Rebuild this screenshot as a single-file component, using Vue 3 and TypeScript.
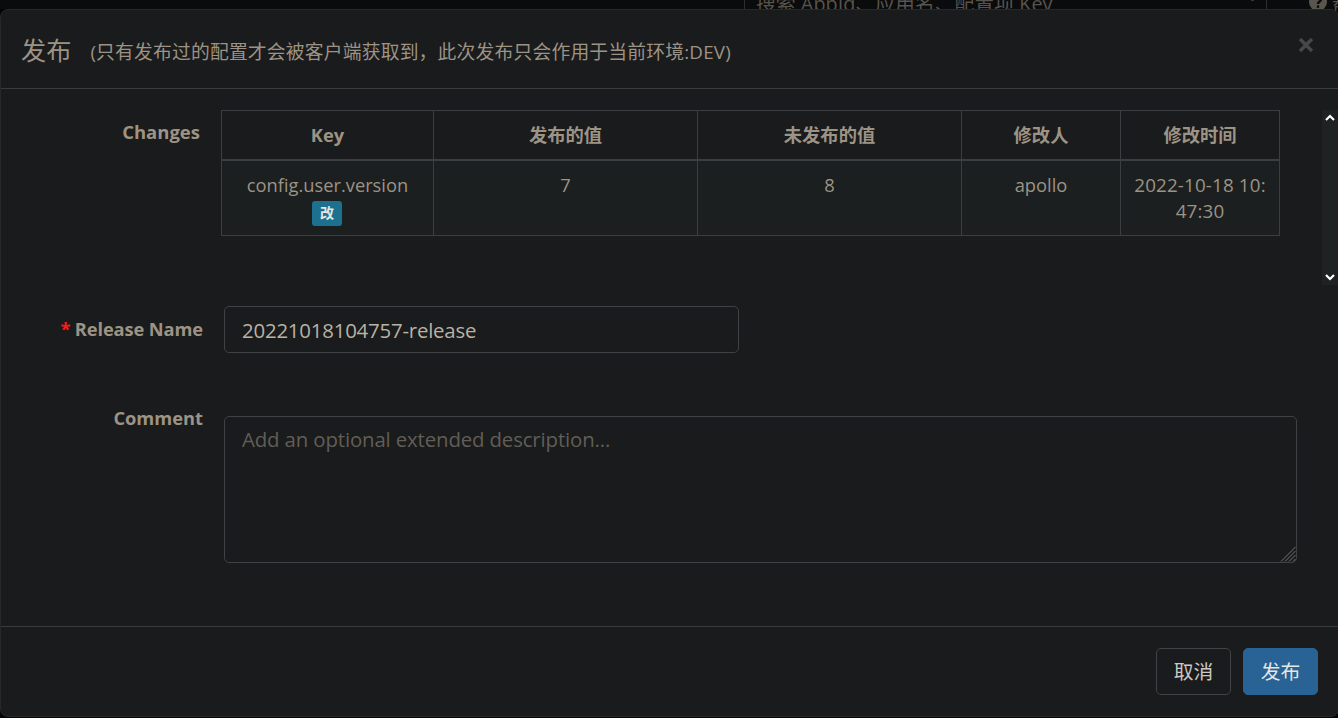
<script setup lang="ts">
import { ref } from 'vue'

interface Change {
  key: string
  oldValue: string
  newValue: string
  operator: string
  time: string[]
}

const headers: string[] = ['Key', '发布的值', '未发布的值', '修改人', '修改时间']
const changes: Change[] = [
  { key: 'config.user.version', oldValue: '7', newValue: '8', operator: 'apollo', time: ['2022-10-18 10:', '47:30'] },
]
const releaseName = ref('20221018104757-release')
const comment = ref('')
</script>

<template>
  <div class="page">
    <div class="navbar">
      <div class="search"><span class="search-text">搜索 AppId、应用名、配置项 Key</span><i class="caret"></i></div>
      <svg class="help" width="18" height="18" viewBox="0 0 18 18">
        <circle cx="9" cy="9" r="9" fill="#5a554d" />
        <path d="M6 6.5C6 3 12 3 12 6.5C12 8.6 9 8.6 9 11" fill="none" stroke="#0b0c0d" stroke-width="2.4" />
        <rect x="7.8" y="12.4" width="2.4" height="2.4" fill="#0b0c0d" />
      </svg>
      <span class="help-text">帮助</span>
    </div>

    <div class="modal">
      <header class="modal-header">
        <h4 class="title">发布</h4>
        <small class="subtitle">(只有发布过的配置才会被客户端获取到，此次发布只会作用于当前环境:DEV)</small>
        <button class="close" type="button" aria-label="Close">
          <svg width="16" height="16" viewBox="0 0 16 16">
            <path d="M2 2L14 14M14 2L2 14" stroke="#474848" stroke-width="3.4" fill="none" />
          </svg>
        </button>
      </header>

      <section class="modal-body">
        <div class="changes">
          <div class="label changes-label">Changes</div>
          <table class="table">
            <colgroup>
              <col class="c-key" /><col class="c-val" /><col class="c-val" /><col class="c-meta" /><col class="c-meta" />
            </colgroup>
            <thead>
              <tr><th v-for="h in headers" :key="h">{{ h }}</th></tr>
            </thead>
            <tbody>
              <tr v-for="c in changes" :key="c.key">
                <td><span class="key">{{ c.key }}</span><span class="badge">改</span></td>
                <td>{{ c.oldValue }}</td>
                <td>{{ c.newValue }}</td>
                <td>{{ c.operator }}</td>
                <td><span v-for="t in c.time" :key="t" class="time">{{ t }}</span></td>
              </tr>
            </tbody>
          </table>
          <div class="scrollbar">
            <svg width="10" height="8" viewBox="0 0 10 8"><path d="M1 6L5 2L9 6" fill="none" stroke="#fff" stroke-width="2.2" /></svg>
            <svg width="10" height="8" viewBox="0 0 10 8"><path d="M1 2L5 6L9 2" fill="none" stroke="#fff" stroke-width="2.2" /></svg>
          </div>
        </div>

        <div class="row name-row">
          <label class="label form-label name-label" for="name"><span class="star">*</span> Release Name</label>
          <input id="name" v-model="releaseName" class="control input" type="text" />
        </div>

        <div class="row comment-row">
          <label class="label form-label" for="comment">Comment</label>
          <div class="area-wrap">
            <textarea id="comment" v-model="comment" class="control area" placeholder="Add an optional extended description..."></textarea>
            <svg class="grip" width="16" height="16" viewBox="0 0 16 16">
              <path d="M1 15.5L15.5 1M5 15.5L15.5 5M9 15.5L15.5 9M13 15.5L15.5 13" stroke="#77756f" stroke-width="1" fill="none" />
            </svg>
          </div>
        </div>
      </section>

      <footer class="modal-footer">
        <button class="btn" type="button">取消</button>
        <button class="btn primary" type="button">发布</button>
      </footer>
    </div>
  </div>
</template>

<style>
html, body { margin: 0; background: #040404; overflow: hidden; }
</style>

<style scoped>
* { box-sizing: border-box; }
.page {
  width: 1338px;
  height: 718px;
  overflow: hidden;
  background: #040404;
  font-family: "Open Sans", "Noto Sans CJK SC", sans-serif;
  font-size: 18.3px;
  color: #9d9385;
}
.navbar {
  height: 9px;
  display: flex;
  align-items: flex-start;
  background: #0a0b0c;
}
.search {
  position: relative;
  flex: none;
  margin-left: 744px;
  width: 523px;
  height: 9px;
  padding-left: 11px;
  border-left: 1px solid #2b2d2e;
  border-right: 1px solid #2b2d2e;
  white-space: nowrap;
}
.search-text {
  display: block;
  margin-top: -9px;
  font-size: 19.85px;
  line-height: 26px;
  color: #58534b;
}
.caret { position: absolute; right: 12px; top: 0; width: 3px; height: 1px; background: #3a3834; }
.help { margin: -7px 0 0 42px; flex: none; }
.help-text { flex: none; margin: -9px 0 0 5px; font-size: 19px; line-height: 26px; color: #58534b; white-space: nowrap; }
.modal {
  position: relative;
  width: 1339px;
  height: 708px;
  display: flex;
  flex-direction: column;
  background: #191b1c;
  border: 1px solid #292826;
  border-radius: 8px;
}
.modal-header {
  height: 79px;
  flex: none;
  display: flex;
  padding-left: 20px;
  border-bottom: 1px solid #393c3d;
  white-space: nowrap;
}
.title { margin: 22px 0 0; font-size: 25.2px; line-height: 36px; font-weight: 400; }
.subtitle { margin: 28px 0 0 19px; font-size: 18.8px; line-height: 28px; letter-spacing: 0.19px; }
.close {
  margin: 27px 24px 0 auto;
  width: 16px;
  height: 16px;
  padding: 0;
  border: 0;
  background: none;
}
.close svg { display: block; }
.modal-body { height: 537px; flex: none; padding-top: 21px; }
.changes { display: flex; height: 175px; }
.label { font-weight: 700; text-align: right; line-height: 26px; white-space: nowrap; flex: none; }
.changes-label { width: 199px; margin: 9px 21px 0 0; font-size: 18.5px; }
.table {
  width: 1059px;
  height: 126px;
  flex: none;
  align-self: flex-start;
  table-layout: fixed;
  border-collapse: collapse;
  text-align: center;
}
.c-key { width: 212px; }
.c-val { width: 264px; }
.c-meta { width: 159px; }
th, td { border: 1px solid #3c3f41; padding: 0; line-height: 26px; }
th { height: 49px; border-bottom-width: 2px; font-weight: 700; }
td { height: 75px; padding-top: 11px; vertical-align: top; background: #1b1f20; }
.key, .time { display: block; }
.time { font-size: 18.8px; letter-spacing: 0.16px; }
.badge {
  display: block;
  width: 30px;
  height: 25px;
  margin: 3px auto 0 90px;
  border-radius: 3px;
  background: #1c728e;
  color: #e8e6e3;
  font-size: 14px;
  line-height: 24px;
  font-weight: 700;
}
.scrollbar {
  width: 16px;
  height: 175px;
  margin-left: 42px;
  padding: 4px 3px;
  display: flex;
  flex-direction: column;
  justify-content: space-between;
  background: #1f2223;
}
.row { display: flex; }
.form-label { width: 202px; margin-right: 21px; }
.name-row { margin-top: 21px; height: 47px; }
.name-row .label { margin-top: 10px; }
.name-label { letter-spacing: -0.12px; }
.star { color: #ff1a1a; }
.comment-row { margin-top: 63px; height: 147px; }
.comment-row .label { margin-top: -11px; }
.control {
  display: block;
  margin: 0;
  padding: 0 17px;
  font-family: inherit;
  font-size: 20.4px;
  color: #b9b2a6;
  background: #191b1c;
  border: 1px solid #3d4244;
  border-radius: 5px;
  outline: none;
}
.input { width: 515px; height: 47px; letter-spacing: -0.2px; }
.area-wrap { position: relative; width: 1073px; height: 147px; }
.area { width: 1073px; height: 147px; padding-top: 8px; line-height: 29px; letter-spacing: -0.14px; resize: none; overflow: hidden; }
.area::placeholder { color: #625e57; opacity: 1; }
.grip { position: absolute; right: 1px; bottom: 1px; }
.modal-footer {
  flex: 1;
  display: flex;
  justify-content: flex-end;
  gap: 12px;
  padding: 21px 20px 0 0;
  border-top: 1px solid #393c3d;
}
.btn {
  width: 75px;
  height: 47px;
  padding: 0;
  font-family: inherit;
  font-size: 19.8px;
  line-height: 45px;
  color: #cdc8c0;
  background: #191b1c;
  border: 1px solid #3f4446;
  border-radius: 5px;
}
.primary { background: #296294; border-color: #296294; color: #e8e6e3; }
</style>
